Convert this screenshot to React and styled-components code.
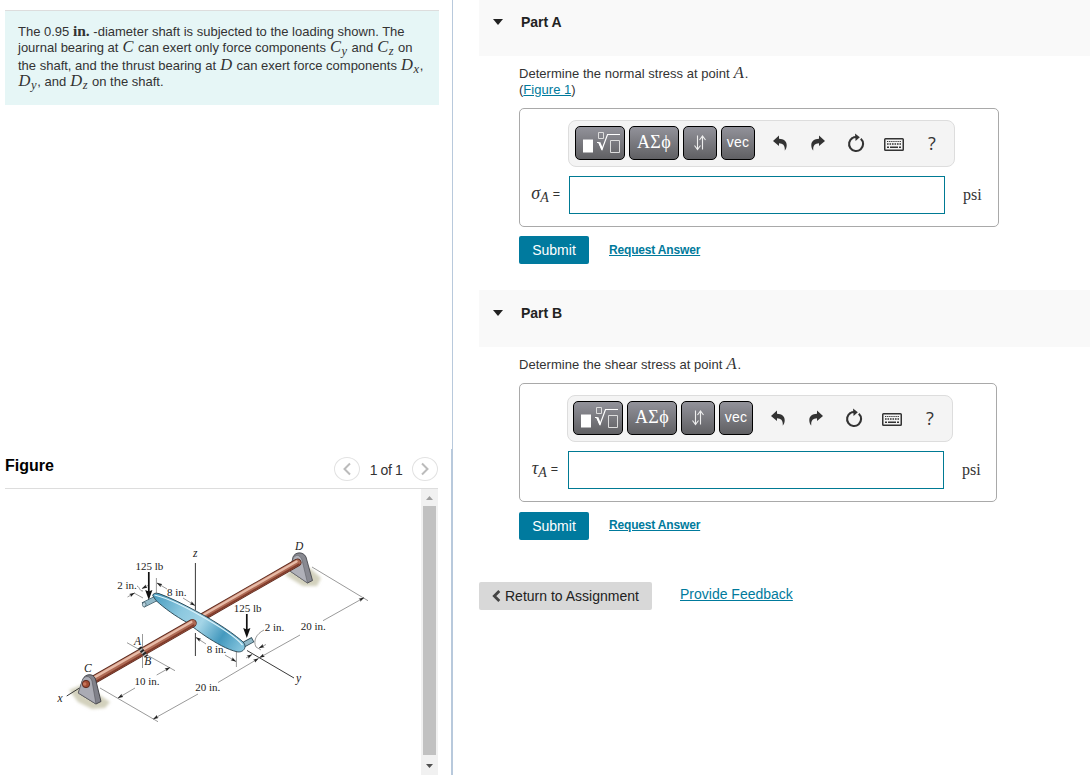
import React from "react";
import styled, { createGlobalStyle } from "styled-components";

function ShaftFigure() {
  return (
    <Drawing viewBox="5 489 416 286">
      <defs>
        <linearGradient id="plate" x1="155" y1="595" x2="243" y2="650" gradientUnits="userSpaceOnUse">
          <stop offset="0" stopColor="#4a9dc0" />
          <stop offset="0.3" stopColor="#8cc8df" />
          <stop offset="0.52" stopColor="#a4d5e7" />
          <stop offset="0.76" stopColor="#4499be" />
          <stop offset="1" stopColor="#8ac8e0" />
        </linearGradient>
        <filter id="soft" x="-30%" y="-30%" width="160%" height="160%">
          <feGaussianBlur stdDeviation="1.5" />
        </filter>
        <marker id="tip" viewBox="0 0 8 6" refX="7.5" refY="3" markerWidth="6" markerHeight="4.2" markerUnits="userSpaceOnUse" orient="auto-start-reverse">
          <path d="M0 0.5 8 3 0 5.5 1.5 3Z" fill="#222" />
        </marker>
      </defs>

      {/* ground */}
      <g fill="#d3d1bd" filter="url(#soft)">
        <path d="M69 690 82 685 101 696 110 702 105 708 92 709 78 702Z" />
        <path d="M285 575 298 565 311 569 321 578 317 586 303 586Z" />
      </g>

      {/* support D */}
      <path d="M290 571 293 557C295 552 303 551 306 557L312.5 580.5 307.5 583Z" fill="#888991" stroke="#393a40" strokeWidth="0.8" />
      <path d="M290 571 293 559C295 554 300 554 302 560L307.5 583Z" fill="#b0b1b9" stroke="#55565d" strokeWidth="0.5" />

      {/* rod behind the plate */}
      <g fill="none" strokeLinecap="round">
        <path d="M199 619 297.5 562.5" stroke="#552419" strokeWidth="7.8" />
        <path d="M199 619 297.5 562.5" stroke="#ae6a54" strokeWidth="6.4" />
        <path d="M198 618 296.5 561.5" stroke="#e7bba8" strokeWidth="2.4" />
        <path d="M200 621 299 564.3" stroke="#803b2b" strokeWidth="1.6" />
      </g>

      {/* pins and plate */}
      <g fill="none" strokeLinecap="butt">
        <path d="M143 605 157 598" stroke="#304c58" strokeWidth="5.6" />
        <path d="M144 604.5 157 598" stroke="#92b9c8" strokeWidth="4.2" />
        <path d="M243 645 253 639.5" stroke="#304c58" strokeWidth="5.6" />
        <path d="M244 644.5 252.3 640" stroke="#92b9c8" strokeWidth="4.2" />
      </g>
      <ellipse cx="144.2" cy="604.6" rx="1.8" ry="2.4" fill="#bbd3dd" stroke="#304c58" strokeWidth="0.6" />
      <path d="M152.7 595.5C153 593 156 592.8 159 593.6C170 597.5 184 604.5 196 611C208 617.5 228 629 242 641C248.5 646.5 243.5 653 237 651.8C227 649.5 216 643 206 636.5C200 632.5 193 627 187 622.5C176 616.5 164 608 156 600.5Z" fill="url(#plate)" stroke="#24414e" strokeWidth="0.9" />
      <path d="M154.5 595C170 598.5 194 611.5 214 623.5C228 632 238 639.5 242.5 645" fill="none" stroke="#def3fa" strokeWidth="1.2" />

      {/* rod in front */}
      <g fill="none" strokeLinecap="round">
        <path d="M88 683 192.5 623.2" stroke="#552419" strokeWidth="8.4" />
        <path d="M88 683 192.5 623.2" stroke="#ae6a54" strokeWidth="7" />
        <path d="M87 681.7 191.3 622" stroke="#e7bba8" strokeWidth="2.5" />
        <path d="M90 685 193.6 625.3" stroke="#803b2b" strokeWidth="1.8" />
      </g>
      <path d="M140 648.5 146 656.5" stroke="#bbb" strokeWidth="3.6" />
      <path d="M139.5 647.5 146.5 656.5" stroke="#222" strokeWidth="4.2" strokeDasharray="2 1.4" />

      {/* support C */}
      <path d="M78.3 693 83 679C85 674 93 672.5 95.5 679L101 701.5 96 704Z" fill="#80818a" stroke="#393a40" strokeWidth="0.9" />
      <path d="M78.3 693 82 681C84 675 90 675 92 681L96 704Z" fill="#aaabb4" stroke="#55565d" strokeWidth="0.6" />
      <circle cx="86" cy="684" r="3.7" fill="#a34b32" stroke="#4c1e14" strokeWidth="0.8" />
      <circle cx="84.7" cy="684" r="1.8" fill="#c7765b" />

      {/* axes */}
      <g stroke="#222" strokeWidth="0.9" fill="none">
        <path d="M195.4 563V610M195.4 633V656M66.7 696 79 688.3M247 650.5 294 678" />
      </g>

      {/* dimension lines */}
      <g stroke="#555" strokeWidth="0.6" fill="none">
        <path d="M142.5 634V650M142.5 657V668M127 642.7 140 650M147 655 175 670.7" />
        <path d="M100 688 158 721.7M312 567 368 600.7M156.4 578V593M236.4 651V667" />
        <path d="M137 586C140 587 139 591 143 591M134 593 143 598" />
        <path d="M264 630C256 634 253 641 256 647L261 650" />
        <path d="M156.7 675 170 667.5" markerEnd="url(#tip)" />
        <path d="M135 688 118 698" markerEnd="url(#tip)" />
        <path d="M198 694 153.3 719" markerEnd="url(#tip)" />
        <path d="M218 682.5 258.5 658.5" markerEnd="url(#tip)" />
        <path d="M300 635 259.5 657.7" markerEnd="url(#tip)" />
        <path d="M323 620.7 364 597.7" markerEnd="url(#tip)" />
        <path d="M167 589 157 583" markerEnd="url(#tip)" />
        <path d="M183 598 195 605.5" markerEnd="url(#tip)" />
        <path d="M206 644 196 637.5" markerEnd="url(#tip)" />
        <path d="M225 655 236 661.5" markerEnd="url(#tip)" />
        <path d="M127.5 597 134.5 593" markerEnd="url(#tip)" />
        <path d="M148 585.5 142 588.5" markerEnd="url(#tip)" />
        <path d="M246 658 252 654.5" markerEnd="url(#tip)" />
        <path d="M266 644.5 259 648" markerEnd="url(#tip)" />
      </g>

      {/* loads */}
      <path d="M148.8 572V592M246.8 614V630" stroke="#111" strokeWidth="1.7" />
      <path d="M145.2 590 148.8 591.5 152.4 590 148.8 600ZM243.2 628 246.8 629.5 250.4 628 246.8 638Z" fill="#111" />

      <FigText x="135.5" y="570">125 lb</FigText>
      <FigText x="233.8" y="611.7">125 lb</FigText>
      <FigText x="117.3" y="588.5">2 in.</FigText>
      <FigText x="167" y="596">8 in.</FigText>
      <FigText x="264.8" y="631">2 in.</FigText>
      <FigText x="206.8" y="652.5">8 in.</FigText>
      <FigText x="300.7" y="629.5">20 in.</FigText>
      <FigText x="195.2" y="690.5">20 in.</FigText>
      <FigText x="134.5" y="685">10 in.</FigText>
      <FigText $italic x="193" y="557">z</FigText>
      <FigText $italic x="295" y="549.5">D</FigText>
      <FigText $italic x="84" y="671.5">C</FigText>
      <FigText $italic x="134" y="645">A</FigText>
      <FigText $italic x="144.3" y="664.7">B</FigText>
      <FigText $italic x="57.5" y="701.5">x</FigText>
      <FigText $italic x="296" y="682">y</FigText>
    </Drawing>
  );
}

function TemplateIcon() {
  return (
    <svg width="40" height="24" viewBox="0 0 40 24" fill="none" stroke="#fff">
      <path d="M3 9.5h10v13H3z" fill="#fff" stroke="none" />
      <path d="M18.5 3v-.5h5v6h-5z" stroke="#ddd" />
      <path d="M17 12.5h2l3 7L27.5 4.5H40" strokeWidth="1.2" />
      <path d="M19.3 12.5 22.3 19.5" strokeWidth="2" />
      <path d="M30.5 10.5h9v12h-9z" stroke="#ddd" />
    </svg>
  );
}

function ArrowsIcon() {
  return (
    <svg width="14" height="18" viewBox="0 0 14 18" fill="none" stroke="#eee" strokeWidth="1.1">
      <path d="M4.5 2.5v13.5M1.5 12.5l3 4 3-4M9.5 16.5V3M6.5 7l3-4 3 4" />
    </svg>
  );
}

function UndoIcon() {
  return (
    <svg width="14" height="16" viewBox="0 0 14 16" fill="#333">
      <path d="M0 6 6 0.5V3.7C11.5 3.8 14.5 7 13.5 12 13.2 13.7 12.5 14.8 11.7 15.5 12.2 11 10.5 8.3 6 8.2V11Z" />
    </svg>
  );
}

function ResetIcon() {
  return (
    <svg width="18" height="20" viewBox="0 0 18 20">
      <path d="M5.6 4.9A7 7 0 1 0 13.8 5.8" fill="none" stroke="#333" strokeWidth="2.1" />
      <path d="M8 0.4 12.8 4.2 8.6 8Z" fill="#333" />
      <path d="M5 5.2Q7 3.9 9.5 4" fill="none" stroke="#333" strokeWidth="1.9" />
    </svg>
  );
}

function KeyboardIcon() {
  return (
    <svg width="20" height="13" viewBox="0 0 20 13" fill="none" stroke="#333">
      <rect x="0.75" y="0.75" width="18.5" height="11.5" rx="0.8" strokeWidth="1.5" />
      <path d="M3 3.5h14" strokeWidth="1.2" strokeDasharray="1.3 0.8" />
      <path d="M3 6h14" strokeWidth="1.4" strokeDasharray="1.6 0.9" />
      <path d="M3 9.3h2M6 9.3h8M15 9.3h2" strokeWidth="1.5" />
    </svg>
  );
}

function AnswerBox({ symbol, compact }) {
  return (
    <Answer $compact={compact}>
      <Toolbar $compact={compact}>
        <ToolButton $wide><TemplateIcon /></ToolButton>
        <ToolButton $wide><Greek>ΑΣϕ</Greek></ToolButton>
        <ToolButton><ArrowsIcon /></ToolButton>
        <ToolButton>vec</ToolButton>
        <IconGroup>
          <IconSlot><UndoIcon /></IconSlot>
          <IconSlot><Flip><UndoIcon /></Flip></IconSlot>
          <IconSlot><ResetIcon /></IconSlot>
          <IconSlot $low><KeyboardIcon /></IconSlot>
          <IconSlot>?</IconSlot>
        </IconGroup>
      </Toolbar>
      <EntryRow>
        <Label $compact={compact}>
          <Symbol>{symbol}<sub>A</sub></Symbol>=
        </Label>
        <Entry />
        <Unit>psi</Unit>
      </EntryRow>
    </Answer>
  );
}

function App() {
  return (
    <Page>
      <GlobalStyle />
      <LeftPane>
        <TopLeft>
          <Problem>
            <Line $h={16}>The 0.95 <Roman>in.</Roman> -diameter shaft is subjected to the loading shown. The</Line>
            <Line $h={18}>journal bearing at <Var>C</Var> can exert only force components <Var>C<sub>y</sub></Var> and <Var>C<sub>z</sub></Var> on</Line>
            <Line $h={16}>the shaft, and the thrust bearing at <Var>D</Var> can exert force components <Var>D<sub>x</sub></Var>,</Line>
            <Line $h={16}><Var>D<sub>y</sub></Var>, and <Var>D<sub>z</sub></Var> on the shaft.</Line>
          </Problem>
        </TopLeft>
        <FigurePane>
          <FigureHead>
            <FigureTitle>Figure</FigureTitle>
            <Round>
              <svg width="10" height="14" viewBox="0 0 10 14"><path d="M8 1.5 2.5 7 8 12.5" /></svg>
            </Round>
            <Count>1 of 1</Count>
            <Round>
              <svg width="10" height="14" viewBox="0 0 10 14"><path d="M2 1.5 7.5 7 2 12.5" /></svg>
            </Round>
          </FigureHead>
          <FigureBody>
            <ShaftFigure />
            <Scrollbar>
              <svg width="17" height="17"><path d="M5 11 8.5 7 12 11Z" fill="#a0a0a0" /></svg>
              <Thumb />
              <svg width="17" height="20"><path d="M5 9H12L8.5 13Z" fill="#505050" /></svg>
            </Scrollbar>
          </FigureBody>
        </FigurePane>
      </LeftPane>

      <RightPane>
        <PartHead><Caret /><PartTitle>Part A</PartTitle></PartHead>
        <PartBody $h={234}>
          <Question $h={52}>
            Determine the normal stress at point <Var>A</Var>.
            <div>(<Link>Figure 1</Link>)</div>
          </Question>
          <AnswerBox symbol="σ" />
          <Actions>
            <Submit>Submit</Submit>
            <Request $low>Request Answer</Request>
          </Actions>
        </PartBody>
        <PartHead $tall><Caret /><PartTitle>Part B</PartTitle></PartHead>
        <PartBody $h={235}>
          <Question $h={36}>
            Determine the shear stress at point <Var>A</Var>.
          </Question>
          <AnswerBox symbol="τ" compact />
          <Actions $late>
            <Submit>Submit</Submit>
            <Request>Request Answer</Request>
          </Actions>
        </PartBody>
        <Footer>
          <Return>
            <svg width="9" height="12" viewBox="0 0 9 12"><path d="M7.3 1 2.3 6 7.3 11" fill="none" stroke="#444" strokeWidth="2.8" /></svg>
            Return to Assignment
          </Return>
          <Feedback>Provide Feedback</Feedback>
        </Footer>
      </RightPane>
    </Page>
  );
}

const GlobalStyle = createGlobalStyle`
  * {
    box-sizing: border-box;
  }
  body {
    margin: 0;
    background: #fff;
    color: #333;
    font-family: "Liberation Sans", Arial, sans-serif;
    font-size: 13px;
    overflow: hidden;
  }
  button {
    font-family: inherit;
    border: none;
    padding: 0;
  }
`;
const Page = styled.div`
  display: flex;
  height: 775px;
`;
const LeftPane = styled.div`
  width: 453px;
  flex-shrink: 0;
`;
const TopLeft = styled.div`
  height: 449px;
  padding: 10px 13px 0 5px;
  border-right: 1px solid #b8c9dc;
`;
const Problem = styled.div`
  height: 95px;
  padding: 12px 0 0 13px;
  border-top: 1px solid #ddd;
  background: #e6f6f6;
`;
const Line = styled.div`
  height: ${(p) => p.$h}px;
  line-height: 18px;
  white-space: nowrap;
`;
const Roman = styled.span`
  font-family: "Liberation Serif", serif;
  font-size: 15.5px;
  font-weight: bold;
  line-height: 0;
`;
const Var = styled.i`
  margin: 0 0.8px 0 0.5px;
  font-family: "Liberation Serif", serif;
  font-size: 16.5px;
  letter-spacing: 0;
  line-height: 0;
  sub {
    margin-left: 0.5px;
    font-size: 12.5px;
    line-height: 0;
    vertical-align: -3px;
  }
`;
const FigurePane = styled.div`
  height: 326px;
  padding: 0 13px 0 5px;
  border-right: 2px solid #b8c9dc;
`;
const FigureHead = styled.div`
  display: flex;
  align-items: center;
  height: 40px;
  border-bottom: 1px solid #ddd;
`;
const FigureTitle = styled.h2`
  flex: 1;
  margin: 0;
  padding-bottom: 6px;
  color: #000;
  font-size: 16px;
`;
const Round = styled.span`
  display: flex;
  align-items: center;
  justify-content: center;
  width: 26px;
  height: 24px;
  border: 1px solid #e2e2e2;
  border-radius: 50%;
  path {
    fill: none;
    stroke: #bbb;
    stroke-width: 2;
  }
`;
const Count = styled.span`
  width: 52px;
  padding-top: 2px;
  text-align: center;
  font-size: 14px;
  letter-spacing: -0.4px;
`;
const FigureBody = styled.div`
  display: flex;
  height: 286px;
`;
const Drawing = styled.svg`
  width: 416px;
  height: 286px;
  flex-shrink: 0;
`;
const FigText = styled.text`
  font-family: "Liberation Serif", serif;
  font-size: ${(p) => (p.$italic ? 11.5 : 11)}px;
  font-style: ${(p) => (p.$italic ? "italic" : "normal")};
  fill: #222;
`;
const Scrollbar = styled.div`
  display: flex;
  flex-direction: column;
  align-items: center;
  width: 17px;
  background: #f1f1f1;
`;
const Thumb = styled.div`
  flex: 1;
  width: 13px;
  background: #c1c1c1;
`;
const RightPane = styled.div`
  flex: 1;
  padding-left: 26px;
`;
const PartHead = styled.div`
  display: flex;
  height: ${(p) => (p.$tall ? 57 : 56)}px;
  padding: ${(p) => (p.$tall ? 15 : 14)}px 0 0 14px;
  background: #f9f9f9;
`;
const Caret = styled.span`
  width: 0;
  height: 0;
  margin-top: 5px;
  border: 5.5px solid transparent;
  border-top: 6px solid #222;
  border-bottom: 0;
`;
const PartTitle = styled.h3`
  margin: 0 0 0 18px;
  color: #222;
  font-size: 14px;
  line-height: 17px;
`;
const PartBody = styled.div`
  height: ${(p) => p.$h}px;
  padding-left: 40px;
`;
const Question = styled.div`
  height: ${(p) => p.$h}px;
  padding-top: 10px;
  letter-spacing: 0.03px;
  line-height: 16px;
`;
const Link = styled.span`
  color: #007a9c;
  text-decoration: underline;
`;
const Answer = styled.div`
  width: ${(p) => (p.$compact ? 478 : 480)}px;
  height: 119px;
  padding-top: 11px;
  border: 1px solid #a9a9a9;
  border-radius: 5px;
`;
const Toolbar = styled.div`
  display: flex;
  align-items: center;
  gap: 4px;
  width: ${(p) => (p.$compact ? 386 : 387)}px;
  height: 47px;
  margin-left: ${(p) => (p.$compact ? 47 : 48)}px;
  padding: 0 0 2px ${(p) => (p.$compact ? 5 : 6)}px;
  border: 1px solid #ddd;
  border-radius: 8px;
  background: #f4f4f4;
`;
const ToolButton = styled.button`
  display: flex;
  align-items: center;
  justify-content: center;
  width: ${(p) => (p.$wide ? 50 : 34)}px;
  height: 34px;
  padding-bottom: 1px;
  border: 1px solid #000;
  border-radius: 5px;
  background: linear-gradient(#92929a, #606063);
  color: #fff;
  font-size: 14px;
  letter-spacing: 0.3px;
`;
const Greek = styled.span`
  font-family: "Liberation Serif", serif;
  font-size: 18px;
`;
const IconGroup = styled.div`
  display: flex;
  gap: 4px;
  margin-left: 4px;
`;
const IconSlot = styled.span`
  display: flex;
  align-items: center;
  justify-content: center;
  width: 34px;
  height: 34px;
  padding-top: ${(p) => (p.$low ? 4 : 0)}px;
  font-family: "Open Sans", sans-serif;
  font-size: 18px;
`;
const Flip = styled.span`
  display: flex;
  transform: scaleX(-1);
`;
const EntryRow = styled.div`
  display: flex;
  align-items: center;
  margin-top: 9px;
`;
const Label = styled.div`
  width: ${(p) => (p.$compact ? 48 : 49)}px;
  padding: 0 ${(p) => (p.$compact ? 10 : 9)}px 2px 0;
  line-height: 18px;
  text-align: right;
  white-space: nowrap;
  font-size: 12.5px;
`;
const Symbol = styled.i`
  margin-right: 4px;
  font-family: "Liberation Serif", serif;
  font-size: 18px;
  line-height: 0;
  vertical-align: -1px;
  sub {
    font-size: 14px;
    line-height: 0;
    vertical-align: -3px;
  }
`;
const Entry = styled.div`
  width: 376px;
  height: 38px;
  border: 1px solid #007a94;
`;
const Unit = styled.span`
  margin-left: 18px;
  font-family: "Liberation Serif", serif;
  font-size: 16px;
`;
const Actions = styled.div`
  display: flex;
  margin-top: ${(p) => (p.$late ? 10 : 9)}px;
`;
const Submit = styled.button`
  width: 70px;
  height: 28px;
  border-radius: 2px;
  background: #007a9e;
  color: #fff;
  font-size: 14px;
`;
const Request = styled.span`
  margin-left: 20px;
  padding-top: ${(p) => (p.$low ? 7 : 6)}px;
  color: #007a9c;
  font-size: 12px;
  font-weight: bold;
  letter-spacing: -0.17px;
  text-decoration: underline;
`;
const Footer = styled.div`
  display: flex;
`;
const Return = styled.button`
  display: flex;
  align-items: center;
  gap: 4px;
  width: 173px;
  height: 28px;
  padding-left: 13px;
  border-radius: 2px;
  background: #d8d8d8;
  color: #222;
  font-size: 14px;
`;
const Feedback = styled.span`
  margin-left: 28px;
  padding-top: 4px;
  color: #007a9c;
  font-size: 14px;
  text-decoration: underline;
`;

export default App;
